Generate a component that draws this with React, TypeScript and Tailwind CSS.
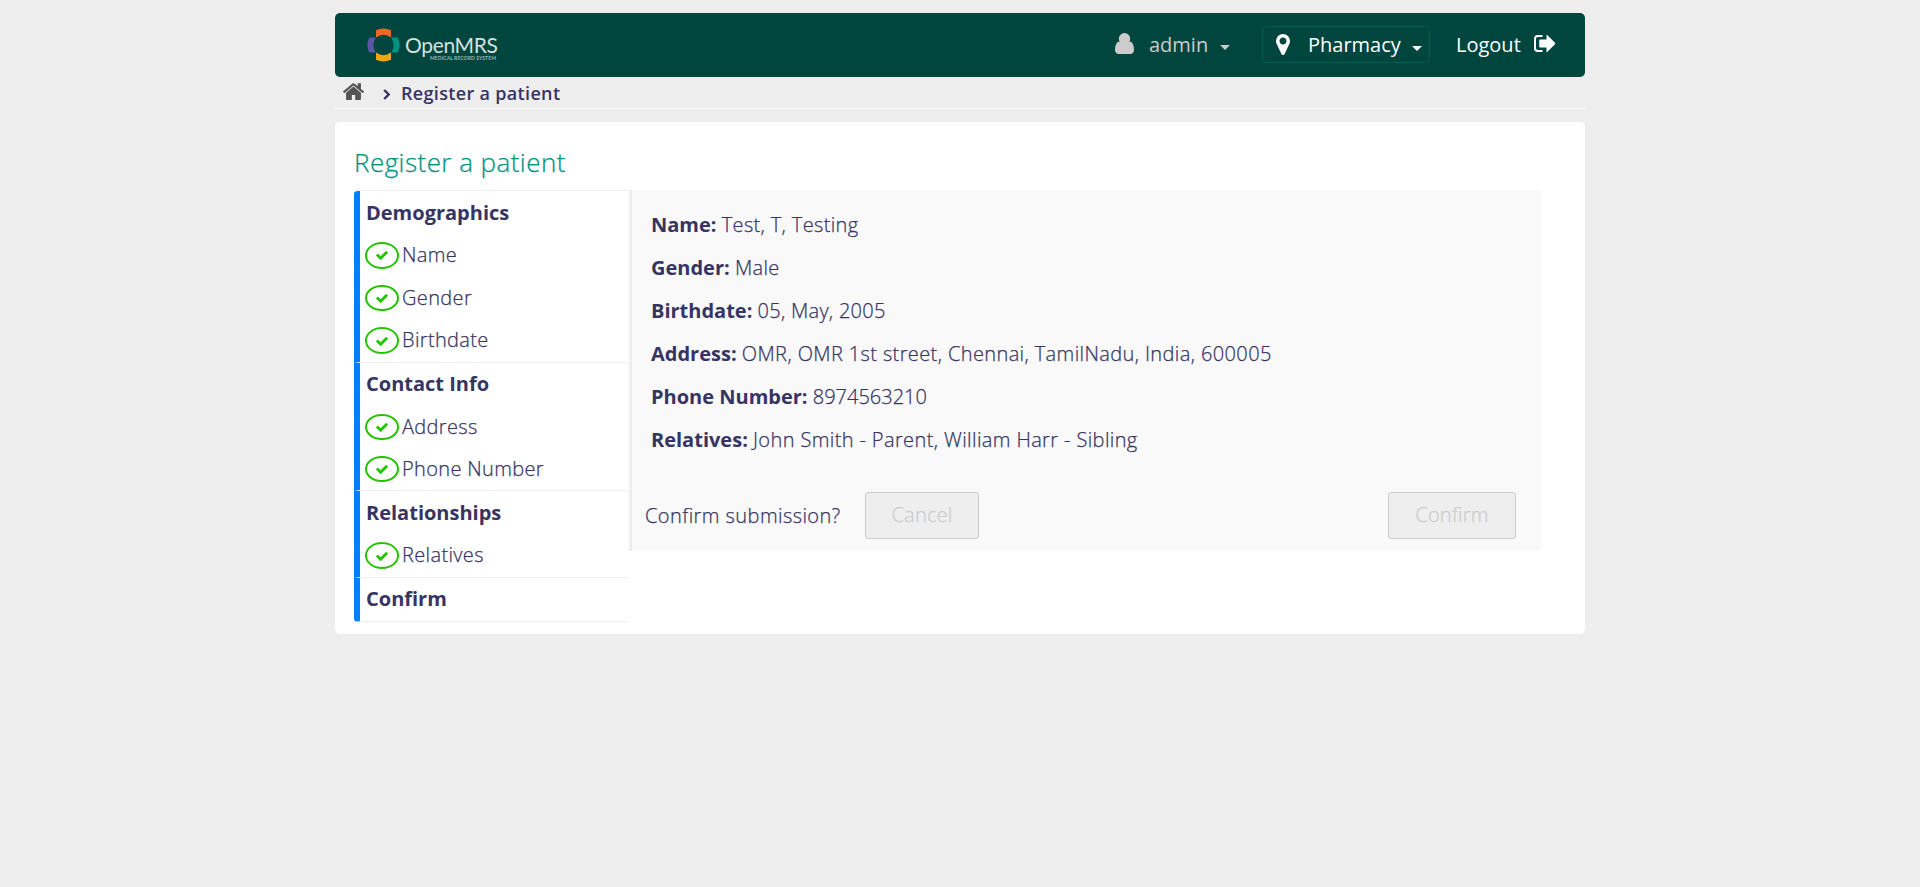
import React from "react";

const CHECK =
  "M1671 566q0 40-28 68l-724 724-136 136q-28 28-68 28t-68-28l-136-136-362-362q-28-28-28-68t28-68l136-136q28-28 68-28t68 28l294 295 656-657q28-28 68-28t68 28l136 136q28 28 28 68z";

const USER =
  "M1280 1271q0 109-62.5 187t-150.5 78h-854q-88 0-150.5-78t-62.5-187q0-85 8.5-160.5t31.5-152 58.5-131 94-89 134.5-34.5q131 128 313 128t313-128q76 0 134.5 34.5t94 89 58.5 131 31.5 152 8.5 160.5zM1024 512q0 159-112.5 271.5t-271.5 112.5-271.5-112.5-112.5-271.5 112.5-271.5 271.5-112.5 271.5 112.5 112.5 271.5z";

const HOME =
  "M1408 992v480q0 26-19 45t-45 19h-384v-384h-256v384h-384q-26 0-45-19t-19-45v-480q0-1 .5-3t.5-3l575-474 575 474q1 2 1 6zm223-69l-62 74q-8 9-21 11h-3q-13 0-21-7l-692-577-692 577q-12 8-24 7-13-2-21-11l-62-74q-8-10-7-23.5t11-21.5l719-599q32-26 76-26t76 26l244 204v-195q0-14 9-23t23-9h192q14 0 23 9t9 23v408l219 182q10 8 11 21.5t-7 23.5z";

const MARKER =
  "M768 640q0-106-75-181t-181-75-181 75-75 181 75 181 181 75 181-75 75-181zm256 0q0 109-33 179l-364 774q-16 33-47.5 52t-67.5 19-67.5-19-46.5-52l-365-774q-33-70-33-179 0-212 150-362t362-150 362 150 150 362z";

type Section = { title: string; height: string; pad: string; items: string[] };

const sections: Section[] = [
  { title: "Demographics", height: "h-[172px]", pad: "pt-px", items: ["Name", "Gender", "Birthdate"] },
  { title: "Contact Info", height: "h-[128px]", pad: "pb-px", items: ["Address", "Phone Number"] },
  { title: "Relationships", height: "h-[87px]", pad: "pt-px", items: ["Relatives"] },
  { title: "Confirm", height: "h-[44px]", pad: "pb-px", items: [] },
];

const details: [string, string, string][] = [
  ["Name", "Test, T, Testing", "tracking-[0.35px]"],
  ["Gender", "Male", "tracking-[0.35px]"],
  ["Birthdate", "05, May, 2005", "tracking-[0.27px]"],
  ["Address", "OMR, OMR 1st street, Chennai, TamilNadu, India, 600005", "tracking-[0.38px]"],
  ["Phone Number", "8974563210", "tracking-normal"],
  ["Relatives", "John Smith - Parent, William Harr - Sibling", "tracking-[0.38px]"],
];

function Logo() {
  return (
    <div className="ml-8 flex items-center">
      <svg className="h-[34px] w-[33px] shrink-0" viewBox="0 0 33 34">
        <path d="M9 2.3Q16.500 -1.200 24 2.300V9.400Q16.500 4.300 9 9.400Z" fill="#f26522" />
        <path d="M9 31.700Q16.500 35.200 24 31.700V24.600Q16.500 29.700 9 24.600Z" fill="#eea616" />
        <path d="M2.300 9.500Q-1.500 17 2.300 24.500H8.800Q3.800 17 8.800 9.500Z" fill="#5b57a6" />
        <path d="M30.700 9.500Q34.500 17 30.700 24.500H24.200Q29.200 17 24.200 9.500Z" fill="#009384" />
      </svg>
      <div className="ml-[5px] flex w-[93px] flex-col font-['Lato',sans-serif] text-[#d6e0de]">
        <span className="mt-[5px] text-[21px] leading-[22px] tracking-[-0.35px]">OpenMRS</span>
        <span className="-mt-px self-end whitespace-nowrap pr-0.5 text-[5px] leading-[6px] font-bold tracking-[0.1px] text-[#9fbab6]">
          MEDICAL RECORD SYSTEM
        </span>
      </div>
    </div>
  );
}

function Caret({ className }: { className: string }) {
  return (
    <svg className={`h-[5px] w-[10px] ${className}`} viewBox="0 0 10 5" fill="currentColor">
      <path d="M0 0h10L5 5z" />
    </svg>
  );
}

function Header() {
  return (
    <header className="flex h-16 items-center rounded-[5px] bg-[#00463f] text-white">
      <Logo />
      <div className="ml-auto flex items-center text-[#ccc]">
        <svg className="mr-[15px] -mt-[3px] h-[21px] w-[19px]" viewBox="0 128 1280 1408" preserveAspectRatio="none" fill="currentColor">
          <path d={USER} />
        </svg>
        <span className="w-[59px]">admin</span>
        <Caret className="mt-1 ml-3" />
      </div>
      <div className="-mt-px ml-8 flex h-[37px] w-[168px] items-center rounded border border-[#005d53] pl-[13px]">
        <svg className="h-[21px] w-[14px]" viewBox="0 128 1024 1536" fill="currentColor">
          <path d={MARKER} />
        </svg>
        <span className="ml-[18px] w-[95px] pt-px">Pharmacy</span>
        <Caret className="mt-[7px] ml-[9px]" />
      </div>
      <span className="ml-[26px] w-[65px]">Logout</span>
      <svg className="-mt-1 mr-[29px] ml-3 h-[19px] w-[23px]" viewBox="0 0 23 19" fill="none">
        <path d="M9.500 2H4.800Q2 2 2 4.800V14.200Q2 17 4.800 17H9.500" stroke="currentColor" strokeWidth="2" />
        <path d="M13.500 1.200Q13.500 .5 14.200 1L22 8.800Q22.500 9.500 22 10.200L14.200 18Q13.500 18.500 13.500 17.800V13.500H7.200Q6.200 13.500 6.200 12.500V6.500Q6.200 5.500 7.200 5.500H13.500Z" fill="currentColor" />
      </svg>
    </header>
  );
}

function Breadcrumbs() {
  return (
    <nav className="flex h-8 items-center border-b border-white pl-2 text-[18px] leading-6 font-semibold tracking-[0.33px]">
      <svg className="-mt-[3px] h-[17px] w-[21px]" viewBox="20 240 1624 1296" preserveAspectRatio="none" fill="#555">
        <path d={HOME} />
      </svg>
      <svg className="mt-[3px] ml-[19px] h-[11px] w-[8px]" viewBox="0 0 8 11" fill="none" stroke="#363463" strokeWidth="2.400">
        <path d="M1.200 1l4.500 4.500L1.200 10" />
      </svg>
      <span className="ml-[10px] pt-px">Register a patient</span>
    </nav>
  );
}

function Steps() {
  return (
    <ul className="w-[275px] shrink-0 overflow-hidden rounded-l-[4px] border-t border-[#eee]">
      {sections.map((s) => (
        <li key={s.title} className={`flex flex-col border-b border-l-[6px] border-b-[#eee] border-l-[#007fff] ${s.height}`}>
          <div className={`flex h-[43px] shrink-0 items-center pl-1.5 font-bold ${s.pad}`}>{s.title}</div>
          {s.items.map((item) => (
            <div key={item} className="flex flex-1 items-center pl-[5px] font-light">
              <span className="mr-[3px] flex h-[26.500px] w-[34px] items-center justify-center rounded-[50%] border-2 border-[#25c400]">
                <svg className="mt-px h-[9px] w-3" viewBox="121 334 1550 1188" fill="#25c400">
                  <path d={CHECK} />
                </svg>
              </span>
              <span className="pb-px tracking-[0.35px] [-webkit-text-stroke:0.25px]">{item}</span>
            </div>
          ))}
        </li>
      ))}
    </ul>
  );
}

function Confirmation() {
  return (
    <section className="h-[361px] w-[912px] border-l-[3px] border-[#eee] bg-[#f9f9f9] pt-[13px] font-light">
      {details.map(([label, value, tracking]) => (
        <p key={label} className="h-[43px] pl-[19px] leading-[43px]">
          <strong className="font-bold">{label}:</strong>{" "}
          <span className={`[-webkit-text-stroke:0.25px] ${tracking}`}>{value}</span>
        </p>
      ))}
      <div className="mt-[31px] flex items-center pr-[25px] pl-[13px] tracking-[0.2px] [-webkit-text-stroke:0.25px]">
        <span className="w-[220px] tracking-[0.43px]">Confirm submission?</span>
        <button className="h-[47px] w-[114px] rounded-[3px] border border-[#ccc] bg-[#eee] pb-0.5 text-[#ccc]">Cancel</button>
        <button className="ml-auto h-[47px] w-[128px] rounded-[3px] border border-[#ccc] bg-[#eee] pb-0.5 text-[#ccc]">Confirm</button>
      </div>
    </section>
  );
}

export default function App() {
  return (
    <div className="min-h-screen bg-[#eee] pt-[13px] font-['Open_Sans',sans-serif] text-[20px] text-[#363463]">
      <div className="mx-auto w-[1250px]">
        <Header />
        <Breadcrumbs />
        <main className="mt-[13px] h-[512px] rounded-[5px] bg-white pt-[20px] pl-[19px]">
          <h2 className="h-[48px] text-[26px] leading-[40px] font-light tracking-[0.45px] text-[#009384] [-webkit-text-stroke:0.25px]">
            Register a patient
          </h2>
          <div className="flex items-start">
            <Steps />
            <Confirmation />
          </div>
        </main>
      </div>
    </div>
  );
}
